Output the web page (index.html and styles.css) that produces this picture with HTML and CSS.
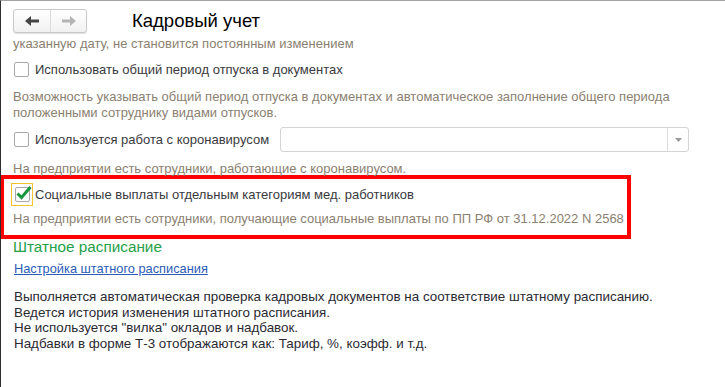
FILE: index.html
```html
<!DOCTYPE html>
<html lang="ru">
  <head>
    <meta charset="UTF-8" />
    <title>Кадровый учет</title>
    <link rel="stylesheet" href="styles.css">
  </head>
  <body>
    <div class="window">
      <div class="toolbar">
        <div class="nav">
          <button class="nav-btn">
            <svg width="14" height="10" viewBox="0 0 14 10"><path d="M0 5 L6 0 L6 3.5 L14 3.5 L14 6.5 L6 6.5 L6 10 Z" fill="#454545"/></svg>
          </button>
          <button class="nav-btn">
            <svg width="14" height="10" viewBox="0 0 14 10"><path d="M14 5 L8 0 L8 3.5 L0 3.5 L0 6.5 L8 6.5 L8 10 Z" fill="#b4b4b4"/></svg>
          </button>
        </div>
        <div class="title">Кадровый учет</div>
      </div>

      <div class="hint cut">указанную дату, не становится постоянным изменением</div>

      <div class="check-row first">
        <span class="box"></span>
        <span class="label">Использовать общий период отпуска в документах</span>
      </div>
      <div class="hint desc">Возможность указывать общий период отпуска в документах и автоматическое заполнение общего периода<br>положенными сотруднику видами отпусков.</div>

      <div class="check-row corona">
        <span class="box"></span>
        <span class="label">Используется работа с коронавирусом</span>
        <div class="combo">
          <span class="combo-field"></span>
          <span class="combo-btn"><svg width="7" height="4" viewBox="0 0 7 4"><path d="M0 0 L7 0 L3.5 4 Z" fill="#9a9a9a"/></svg></span>
        </div>
      </div>
      <div class="hint after-corona">На предприятии есть сотрудники, работающие с коронавирусом.</div>

      <div class="highlight">
        <div class="check-row checked">
          <span class="focus">
            <span class="box">
              <svg width="18" height="16" viewBox="0 0 18 16"><path d="M2.5 8.5 L6.5 12.5 L15.5 2" fill="none" stroke="#1b9640" stroke-width="3"/></svg>
            </span>
          </span>
          <span class="label">Социальные выплаты отдельным категориям мед. работников</span>
        </div>
        <div class="hint in-box">На предприятии есть сотрудники, получающие социальные выплаты по ПП РФ от 31.12.2022 N 2568</div>
      </div>

      <div class="section">Штатное расписание</div>
      <a class="link" href="#">Настройка штатного расписания</a>
      <div class="info">
        Выполняется автоматическая проверка кадровых документов на соответствие штатному расписанию.<br>
        Ведется история изменения штатного расписания.<br>
        Не используется "вилка" окладов и надбавок.<br>
        Надбавки в форме Т-3 отображаются как: Тариф, %, коэфф. и т.д.
      </div>
    </div>
  </body>
</html>
```

FILE: styles.css
```css
body {
  margin: 0;
  padding: 0;
  background-color: #ffffff;
  font-family: "Liberation Sans", Arial, sans-serif;
  font-size: 13px;
  color: #3a3a40;
}
.window {
  box-sizing: border-box;
  height: 387px;
  border-top: 1px solid #a4a4a4;
  border-left: 1px solid #2e2e2e;
  padding-left: 12px;
  overflow: hidden;
}
.toolbar {
  display: flex;
  align-items: center;
  padding-top: 8px;
  height: 24px;
}
.nav {
  display: flex;
  height: 24px;
  border: 1px solid #c9c9c9;
  border-radius: 3px;
  box-sizing: border-box;
  background: linear-gradient(#ffffff, #f1f1f1);
  box-shadow: 0 1px 1px rgba(0, 0, 0, 0.12);
}
.nav-btn {
  width: 36px;
  height: 22px;
  padding: 0;
  border: 0;
  background: transparent;
  display: flex;
  align-items: center;
  justify-content: center;
}
.nav-btn + .nav-btn {
  border-left: 1px solid #dcdcdc;
}
.title {
  margin-left: 45px;
  font-size: 18.5px;
  color: #000;
  line-height: 24px;
}
.hint {
  color: #8b7f71;
  line-height: 16px;
  white-space: nowrap;
}
.cut {
  margin-top: 3px;
}
.check-row {
  display: flex;
  align-items: center;
  height: 20px;
}
.check-row.first {
  margin-top: 7px;
}
.box {
  box-sizing: border-box;
  width: 15px;
  height: 15px;
  margin-left: 1px;
  border: 1px solid #a9a9a9;
  border-radius: 2px;
  background: #fff;
  position: relative;
}
.label {
  margin-left: 6px;
}
.desc {
  margin-top: 10px;
}
.corona {
  margin-top: 6px;
  height: 25px;
}
.combo {
  display: flex;
  margin-left: 11px;
  width: 409px;
  height: 25px;
  box-sizing: border-box;
  border: 1px solid #d4d4d4;
  border-radius: 3px;
}
.combo-field {
  flex: 1;
}
.combo-btn {
  width: 20px;
  border-left: 1px solid #d9d9d9;
  display: flex;
  align-items: center;
  justify-content: center;
}
.after-corona {
  margin-top: 9px;
}
.highlight {
  box-sizing: border-box;
  width: 631px;
  margin-left: -13px;
  margin-top: -2px;
  padding: 4px 0 8px 9px;
  border: 4px solid #ff0000;
}
.checked {
  height: 23px;
}
.focus {
  box-sizing: border-box;
  width: 22px;
  height: 23px;
  margin-left: -2px;
  border: 1px solid #f2c230;
  display: flex;
  align-items: center;
  justify-content: center;
}
.focus .box {
  margin-left: 0;
}
.focus .box svg {
  position: absolute;
  left: -1px;
  top: -3px;
}
.checked .label {
  margin-left: 2px;
}
.in-box {
  margin-top: 5px;
}
.section {
  font-size: 15.3px;
  line-height: 16px;
  color: #27a048;
}
.link {
  display: inline-block;
  margin-top: 6px;
  margin-left: 1px;
  line-height: 16px;
  font-size: 12.8px;
  color: #2c5cb8;
  text-decoration: underline;
}
.info {
  margin-top: 12px;
  margin-left: 1px;
  font-size: 13.4px;
  line-height: 15.7px;
  color: #2a2a32;
}
```
